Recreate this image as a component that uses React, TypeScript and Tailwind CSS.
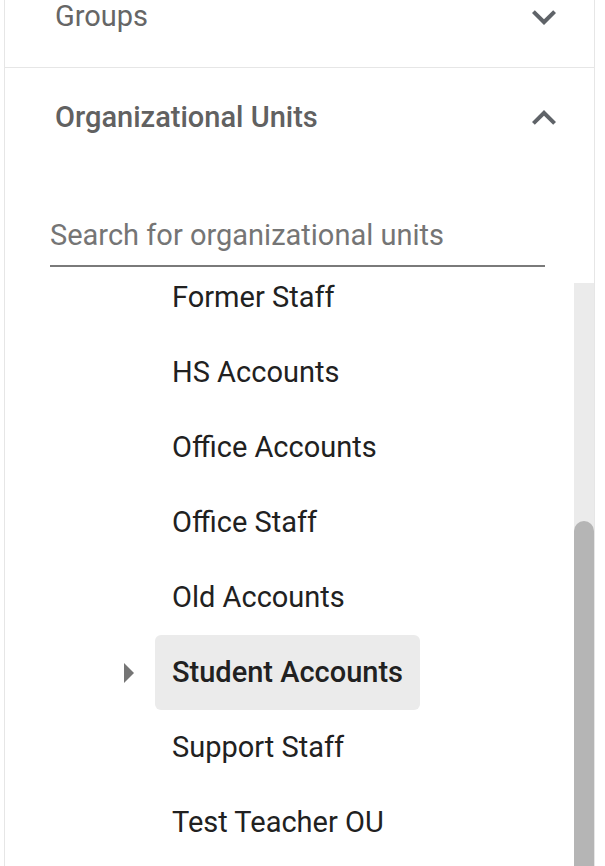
import React from "react";

const UNITS = [
  "Former Staff",
  "HS Accounts",
  "Office Accounts",
  "Office Staff",
  "Old Accounts",
  "Student Accounts",
  "Support Staff",
  "Test Teacher OU",
];

const SELECTED = "Student Accounts";

const ChevronDown: React.FC = () => (
  <svg viewBox="0 0 24 24" className="w-[48px] h-[48px] fill-[#5f6368]">
    <path d="M16.59 8.59L12 13.17 7.41 8.59 6 10l6 6 6-6z" />
  </svg>
);

const ChevronUp: React.FC = () => (
  <svg viewBox="0 0 24 24" className="w-[48px] h-[48px] fill-[#5f6368]">
    <path d="M12 8l-6 6 1.41 1.41L12 10.83l4.59 4.58L18 14z" />
  </svg>
);

const ArrowRight: React.FC = () => (
  <svg viewBox="0 0 24 24" className="w-[48px] h-[48px] fill-[#757575]">
    <path d="M10 17l5-5-5-5v10z" />
  </svg>
);

const App: React.FC = () => {
  return (
    <div
      className="h-[866px] overflow-hidden bg-white"
      style={{ fontFamily: "Roboto, 'Noto Sans', sans-serif" }}
    >
      <div className="ml-[4px] w-[591px] h-full flex flex-col border-x border-[#e6e6e6]">
        {/* Groups (collapsed) */}
        <div className="-mt-[33px] h-[101px] shrink-0 flex items-center justify-between pl-[50px] pr-[26px] border-b border-[#e6e6e6]">
          <span className="text-[29px] text-[#666666]">Groups</span>
          <ChevronDown />
        </div>

        {/* Organizational Units (expanded) */}
        <div className="h-[100px] shrink-0 flex items-center justify-between pl-[50px] pr-[26px]">
          <span className="text-[29px] font-medium text-[#616161]">
            Organizational Units
          </span>
          <ChevronUp />
        </div>

        <div className="mt-[47px] ml-[45px] w-[495px] shrink-0">
          <input
            type="text"
            placeholder="Search for organizational units"
            className="w-full h-[52px] pb-[10px] bg-transparent outline-none border-b-2 border-[#7a7a7a] text-[29px] text-[#202124] placeholder:text-[#757575]"
          />
        </div>

        {/* List with scrollbar */}
        <div className="mt-[16px] flex-1 min-h-0 flex">
          <div className="flex-1 overflow-hidden">
            <div className="-mt-[23px]">
              {UNITS.map((unit) => {
                const selected = unit === SELECTED;
                return (
                  <div key={unit} className="h-[75px] flex items-center pl-[99px]">
                    <div className="w-[48px] h-[48px] shrink-0">
                      {selected && <ArrowRight />}
                    </div>
                    <div
                      className={`ml-[3px] h-full flex items-center px-[17px] rounded-md text-[29px] text-[#212121] ${
                        selected ? "bg-[#ebebeb] font-medium" : ""
                      }`}
                    >
                      {unit}
                    </div>
                  </div>
                );
              })}
            </div>
          </div>
          <div className="w-[20px] shrink-0 bg-[#ebebeb] flex flex-col">
            <div className="h-[238px] shrink-0" />
            <div className="flex-1 bg-[#b5b5b5] rounded-t-full" />
          </div>
        </div>
      </div>
    </div>
  );
};

export default App;
